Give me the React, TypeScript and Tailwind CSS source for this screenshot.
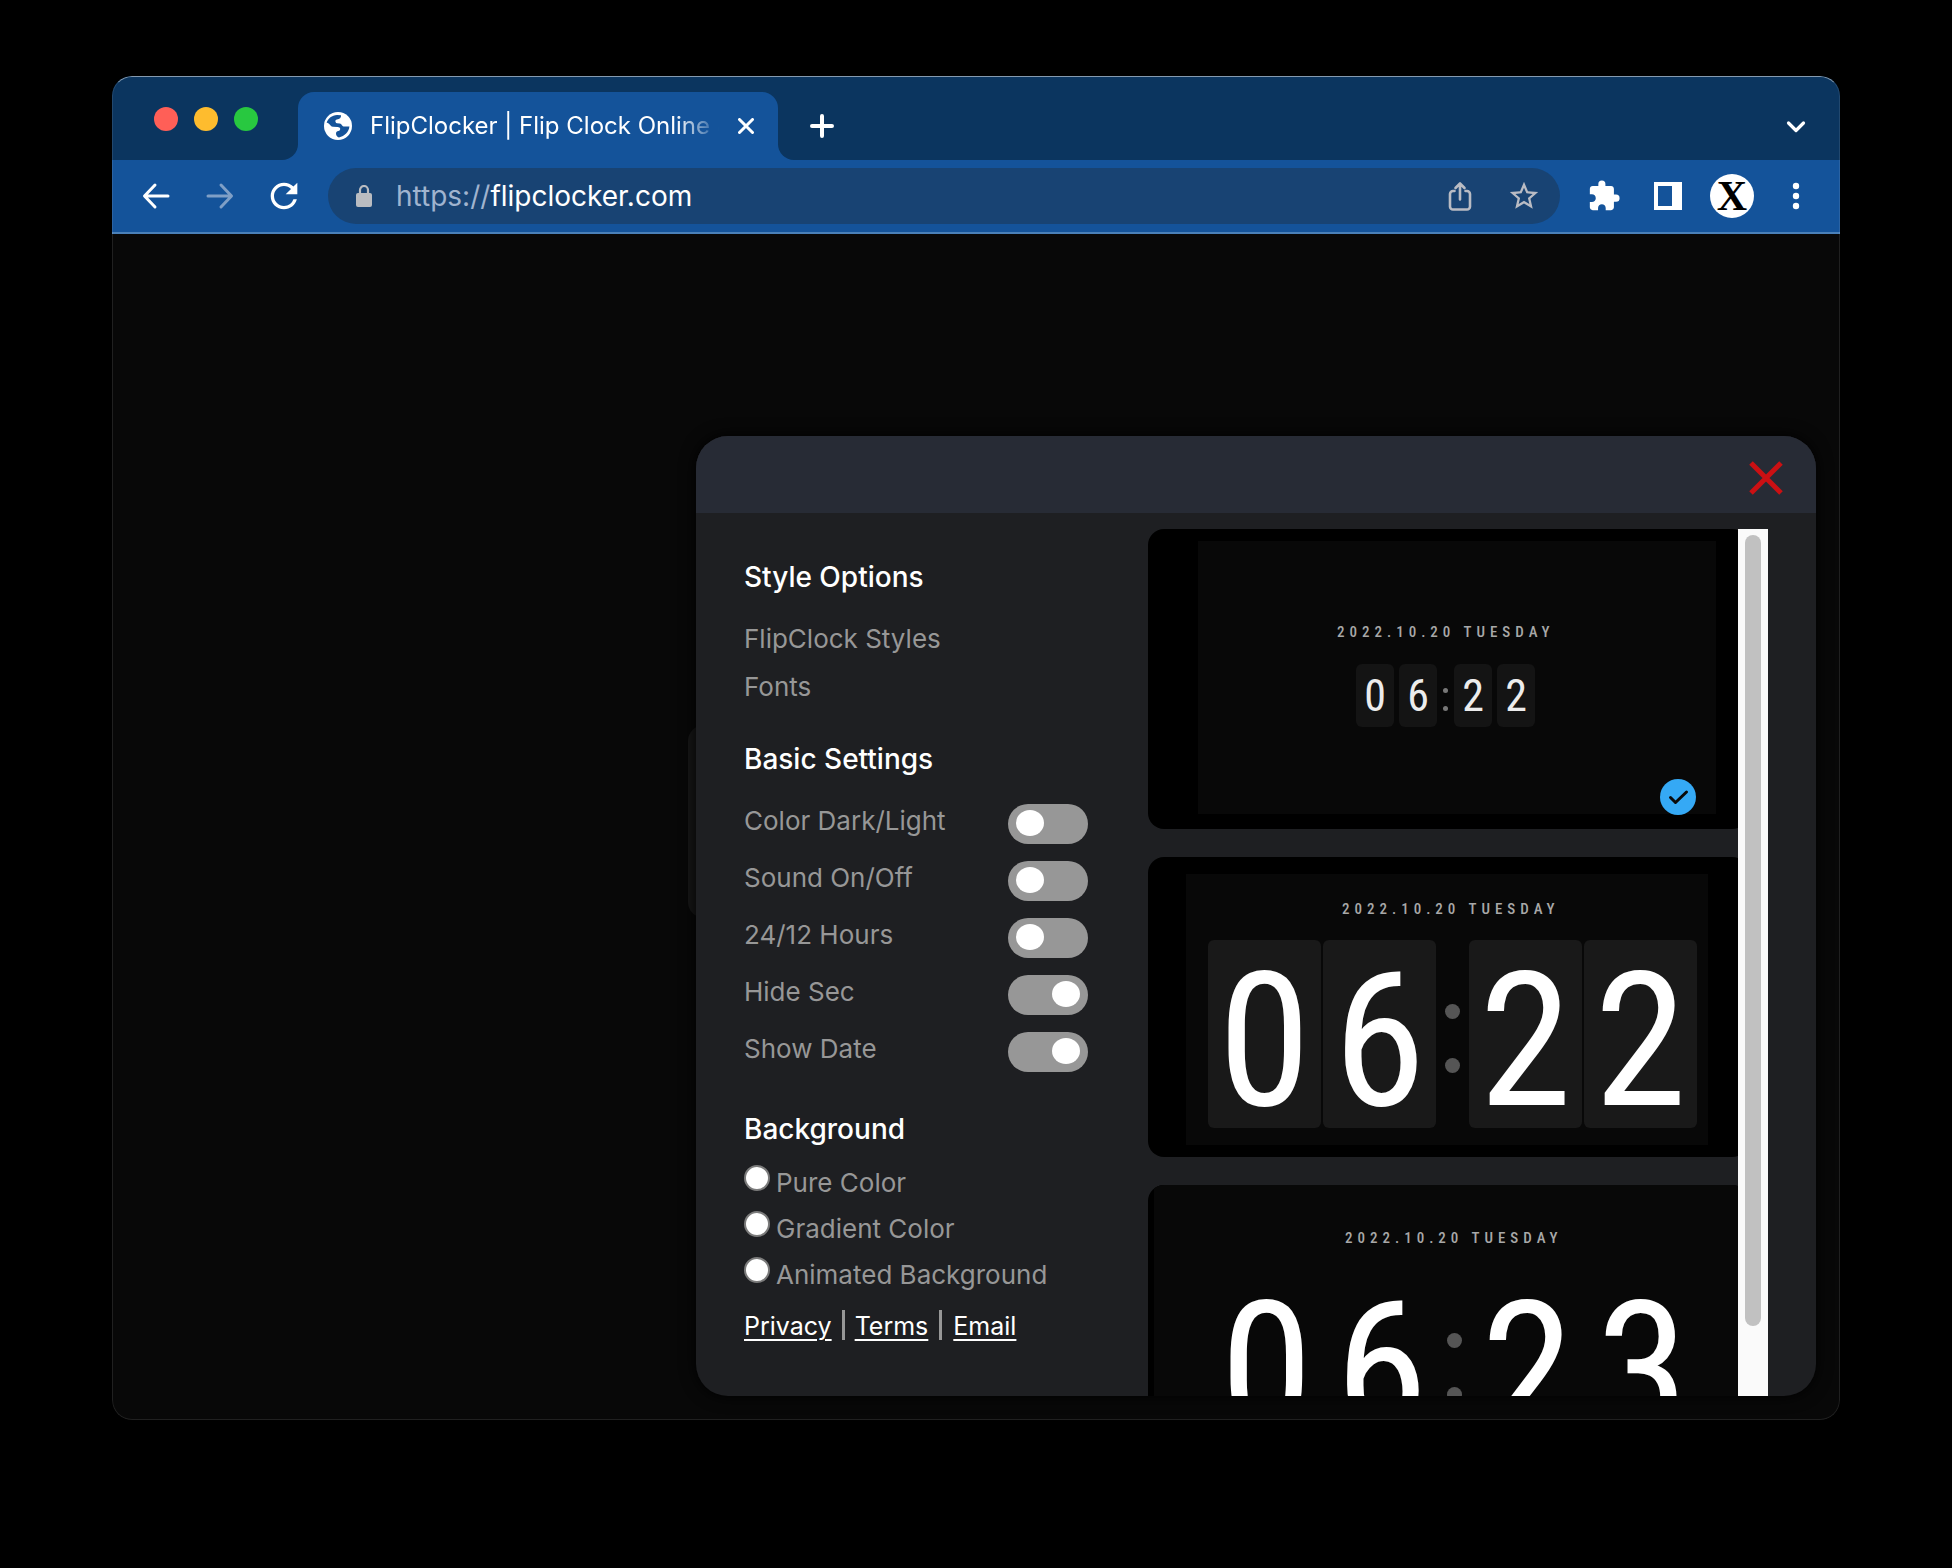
import React from "react";
import { MdExtension, MdRefresh, MdStarBorder } from "react-icons/md";

const toggles = [
  { label: "Color Dark/Light", on: false },
  { label: "Sound On/Off", on: false },
  { label: "24/12 Hours", on: false },
  { label: "Hide Sec", on: true },
  { label: "Show Date", on: true },
];

const backgrounds = ["Pure Color", "Gradient Color", "Animated Background"];

function GlobeIcon() {
  return (
    <svg className="size-7 shrink-0" viewBox="0 0 28 28" aria-hidden="true">
      <circle cx="14" cy="14" r="14" fill="#fff" />
      <path
        fill="#14539a"
        d="M2.6 10.6C4 6.6 8 3.2 13 3l4 .2c.2 1.6-.4 2.8-1.8 3.6-1.6.8-3.6.8-3.8 2-.1 1.3.4 2.2 1.6 2.4l2.6.3c1.5.2 1.9 1.3 2.800 2.200.7.7 1.600.9 2.700.9h4.300c-.4 5.300-4.800 9.800-10.400 10.800-1.700-.5-3-2-3-4 0-1.300 1-1.900 2.300-2.300 1.300-.4 2-1 1.900-2.300-.1-1.200-1.100-1.800-2.500-1.900l-4.700-.2c-2-.1-2.200-1.500-3.300-2.300-.8-.7-1.900-1.200-3.100-1.800z"
      />
    </svg>
  );
}

function Flare({ side }: { side: "left" | "right" }) {
  return (
    <div className="size-4 self-end bg-[#14539a]">
      <div className={side === "left" ? "size-4 rounded-br-2xl bg-[#0b355f]" : "size-4 rounded-bl-2xl bg-[#0b355f]"} />
    </div>
  );
}

function TabStrip() {
  return (
    <div className="flex h-[84px] bg-[#0b355f] pr-7 pl-[42px]">
      <div className="mr-6 flex items-center gap-4 pt-0.5">
        <button aria-label="Close window" className="size-6 rounded-full bg-[#ff5f57]" />
        <button aria-label="Minimize window" className="size-6 rounded-full bg-[#febc2e]" />
        <button aria-label="Zoom window" className="size-6 rounded-full bg-[#28c840]" />
      </div>
      <Flare side="left" />
      <div className="mt-4 flex w-[480px] items-center rounded-t-2xl bg-[#14539a] pr-6 pl-[26px]">
        <GlobeIcon />
        <span className="mr-3 ml-[18px] flex-1 overflow-hidden text-2xl whitespace-nowrap text-white [mask-image:linear-gradient(to_right,black_86%,transparent_98%)]">
          FlipClocker | Flip Clock Online &amp;
        </span>
        <button aria-label="Close tab">
          <svg className="size-4" viewBox="0 0 16 16" stroke="#fff" strokeWidth="3" strokeLinecap="round">
            <path d="M1.500 1.500l13 13M14.500 1.500l-13 13" />
          </svg>
        </button>
      </div>
      <Flare side="right" />
      <button aria-label="New tab" className="mt-4 ml-4">
        <svg className="size-6" viewBox="0 0 24 24" stroke="#fff" strokeWidth="4" strokeLinecap="round">
          <path d="M12 2v20M2 12h20" />
        </svg>
      </button>
      <button aria-label="Search tabs" className="mt-4 ml-auto">
        <svg className="size-8" viewBox="0 0 32 32" fill="none" stroke="#fff" strokeWidth="3.200" strokeLinecap="round" strokeLinejoin="round">
          <path d="M8.500 13l7.500 7.500L23.500 13" />
        </svg>
      </button>
    </div>
  );
}

function Toolbar() {
  return (
    <div className="flex h-[74px] items-center border-b-2 border-[#4a80b8] bg-[#14539a] px-7">
      <div className="flex items-center gap-8">
        <button aria-label="Back">
          <svg className="size-8" viewBox="0 0 32 32" fill="none" stroke="#fff" strokeWidth="3" strokeLinecap="round" strokeLinejoin="round">
            <path d="M28 16H5M15 5L4.500 16 15 27" />
          </svg>
        </button>
        <button aria-label="Forward">
          <svg className="size-8" viewBox="0 0 32 32" fill="none" stroke="#7f9fc6" strokeWidth="3" strokeLinecap="round" strokeLinejoin="round">
            <path d="M4 16h23M17 5l10.500 11L17 27" />
          </svg>
        </button>
        <button aria-label="Reload" className="flex size-8 items-center justify-center">
          <MdRefresh className="size-10 shrink-0 text-white" />
        </button>
      </div>
      <div className="mx-7 flex h-14 flex-1 items-center rounded-full bg-[#184373] pr-5 pl-7">
        <svg className="h-[22px] w-4 shrink-0" viewBox="0 0 16 22" fill="none" aria-hidden="true">
          <rect x="0" y="8" width="16" height="14" rx="2" fill="#b9bcc1" />
          <path d="M4 9V5a4 4 0 018 0v4" stroke="#b9bcc1" strokeWidth="2.200" />
        </svg>
        <div className="ml-6 flex-1 text-[28px] leading-9 text-white">
          <span className="text-[#a0b4cf]">https://</span>flipclocker.com
        </div>
        <button aria-label="Share" className="mr-8">
          <svg className="size-8" viewBox="0 0 32 32" fill="none" stroke="#b9bcc4" strokeWidth="2.600" strokeLinecap="round" strokeLinejoin="round">
            <path d="M10.500 11H9a3 3 0 00-3 3v12.500a3 3 0 003 3h14a3 3 0 003-3V14a3 3 0 00-3-3h-1.500M16 19.500V4M11.500 8L16 3.500 20.500 8" />
          </svg>
        </button>
        <button aria-label="Bookmark this page" className="flex size-8 items-center justify-center">
          <MdStarBorder className="size-[34px] shrink-0 text-[#b9bcc4]" />
        </button>
      </div>
      <div className="flex items-center">
        <button aria-label="Extensions" className="mr-8 flex size-8 items-center justify-center">
          <MdExtension className="size-[34px] shrink-0 text-white" />
        </button>
        <button aria-label="Side panel" className="mr-[26px]">
          <svg className="size-8" viewBox="0 0 32 32">
            <path fill="#fff" fillRule="evenodd" d="M2 2h28v28H2zM6 6v20h14V6z" />
          </svg>
        </button>
        <button
          aria-label="Profile"
          className="mr-[26px] flex size-11 items-center justify-center rounded-full bg-white font-['Liberation_Serif',serif] text-[42px] leading-[44px] font-bold text-black"
        >
          X
        </button>
        <button aria-label="Menu">
          <svg className="size-8" viewBox="0 0 32 32" fill="#fff">
            <circle cx="16" cy="6" r="3.200" />
            <circle cx="16" cy="16" r="3.200" />
            <circle cx="16" cy="26" r="3.200" />
          </svg>
        </button>
      </div>
    </div>
  );
}

function Settings() {
  return (
    <div className="w-[344px] shrink-0 pt-12 pb-14 text-[26px] text-[#979797]">
      <h2 className="text-[28px] leading-8 font-medium text-white">Style Options</h2>
      <ul className="mt-[22px]">
        <li className="leading-[48px]">
          <button>FlipClock Styles</button>
        </li>
        <li className="leading-[48px]">
          <button>Fonts</button>
        </li>
      </ul>

      <h2 className="mt-8 text-[28px] leading-8 font-medium text-white">Basic Settings</h2>
      <div className="mt-[17px]">
        {toggles.map((t) => (
          <label key={t.label} className="flex h-[57px] justify-between leading-[57px]">
            {t.label}
            <input
              type="checkbox"
              role="switch"
              defaultChecked={t.on}
              className="mt-3 h-10 w-20 appearance-none rounded-full bg-[#979797] pt-[6px] pl-2 before:block before:h-[26px] before:w-7 before:rounded-[50%] before:bg-white checked:pl-11"
            />
          </label>
        ))}
      </div>

      <h2 className="mt-9 text-[28px] leading-8 font-medium text-white">Background</h2>
      <div className="mt-[15px]">
        {backgrounds.map((b) => (
          <label key={b} className="flex h-[46px] leading-[46px] whitespace-nowrap">
            <input
              type="radio"
              name="background"
              className="mt-[5px] mr-1.5 size-[26px] shrink-0 appearance-none rounded-full border-2 border-[#7b7b7b] bg-white"
            />
            {b}
          </label>
        ))}
      </div>

      <nav className="mt-3 flex h-[30px] text-[25px] leading-8 text-white">
        <a href="#privacy" className="underline decoration-2 underline-offset-4">Privacy</a>
        <span className="mx-[10px] w-[3px] bg-[#979797]" />
        <a href="#terms" className="underline decoration-2 underline-offset-4">Terms</a>
        <span className="mx-[11px] w-[3px] bg-[#979797]" />
        <a href="#email" className="underline decoration-2 underline-offset-4">Email</a>
      </nav>
    </div>
  );
}

const dateClass = "h-4 font-['Roboto_Condensed',Roboto,sans-serif] text-[15px] leading-4 font-medium tracking-[5px] whitespace-nowrap text-[#a8a8a8]";

function SmallClock() {
  const tile = "flex h-[63px] w-[38px] items-center justify-center rounded-md bg-[#141414]";
  return (
    <div className="flex items-center gap-[5px] font-['Roboto_Condensed',Roboto,sans-serif] text-[44px] leading-none text-[#ececec]">
      <span className={tile}>0</span>
      <span className={tile}>6</span>
      <span className="flex w-[7px] flex-col items-center gap-[13px] pt-2">
        <i className="size-[5px] rounded-full bg-[#777]" />
        <i className="size-[5px] rounded-full bg-[#777]" />
      </span>
      <span className={tile}>2</span>
      <span className={tile}>2</span>
    </div>
  );
}

function LargeClock({ digits, tiled }: { digits: string; tiled: boolean }) {
  const tile = tiled
    ? "flex h-[188px] w-[113px] items-center justify-center rounded-md bg-[#191919] pt-3.5"
    : "flex h-[188px] w-[113px] items-center justify-center pt-3.5";
  return (
    <div className="flex items-center gap-0.5 font-['Roboto_Condensed',Roboto,sans-serif] text-[188px] leading-none text-white">
      <span className={tile}>{digits[0]}</span>
      <span className={tile}>{digits[1]}</span>
      <span className="flex w-[29px] flex-col items-center gap-[39px] pt-2">
        <i className="size-[15px] rounded-full bg-[#555]" />
        <i className="size-[15px] rounded-full bg-[#555]" />
      </span>
      <span className={tile}>{digits[2]}</span>
      <span className={tile}>{digits[3]}</span>
    </div>
  );
}

function Previews() {
  const card = "relative block h-[300px] w-[600px] shrink-0 overflow-hidden rounded-2xl bg-black text-left";
  return (
    <div className="flex min-w-0 flex-1 [contain:size]">
      <div className="flex min-w-0 flex-1 flex-col gap-7 overflow-hidden">
        <button aria-label="Small flip clock" className={card}>
          <div className="mt-3 mb-[15px] ml-[50px] h-[273px] w-[518px] bg-[#080808] pt-[83px]">
            <div className="ml-[139px]">
              <div className={dateClass}>2022.10.20 TUESDAY</div>
            </div>
            <div className="mt-6 ml-[158px]">
              <SmallClock />
            </div>
          </div>
          <svg className="absolute right-[52px] bottom-[14px] size-9" viewBox="0 0 36 36" fill="none">
            <circle cx="18" cy="18" r="18" fill="#35a9f5" />
            <path d="M10.500 18.500l5 5L26.500 13" stroke="#0a0a0a" strokeWidth="3" strokeLinecap="round" strokeLinejoin="round" />
          </svg>
        </button>
        <button aria-label="Large flip clock" className={card}>
          <div className="mt-[17px] mb-3 ml-[38px] h-[271px] w-[522px] bg-[#080808] pt-[27px]">
            <div className="ml-[156px]">
              <div className={dateClass}>2022.10.20 TUESDAY</div>
            </div>
            <div className="mt-[23px] ml-[22px]">
              <LargeClock digits="0622" tiled />
            </div>
          </div>
        </button>
        <button aria-label="Large plain clock" className={card}>
          <div className="ml-1.5 h-[300px] bg-[#080808] pt-[45px]">
            <div className="ml-[191px]">
              <div className={dateClass}>2022.10.20 TUESDAY</div>
            </div>
            <div className="mt-[23px] ml-14">
              <LargeClock digits="0623" tiled={false} />
            </div>
          </div>
        </button>
      </div>
      <div className="flex w-[30px] shrink-0 justify-center bg-[#fafafa] pt-1.5">
        <div className="h-[791px] w-4 rounded-full bg-[#c1c1c1]" />
      </div>
    </div>
  );
}

function SettingsPanel() {
  return (
    <section className="relative w-full max-w-[1120px] overflow-hidden rounded-[32px] bg-[#1e1f22] shadow-[0_0_16px_#000]">
      <header className="flex h-[77px] items-center justify-end bg-[#272b35] pt-1.5 pr-[33px]">
        <button aria-label="Close settings">
          <svg className="size-[34px]" viewBox="0 0 34 34" stroke="#cb1013" strokeWidth="5">
            <path d="M2 2l30 30M32 2L2 32" />
          </svg>
        </button>
      </header>
      <div className="flex gap-[60px] px-12">
        <Settings />
        <div className="flex min-w-0 flex-1 pt-4">
          <Previews />
        </div>
      </div>
    </section>
  );
}

export default function App() {
  return (
    <div className="min-h-screen bg-black px-28 pt-[76px] pb-[148px] font-['Inter',sans-serif]">
      <main className="relative overflow-hidden rounded-[20px] bg-[#080808]">
        <TabStrip />
        <Toolbar />
        <div className="relative flex justify-end pt-[202px] pr-6 pb-6">
          <div className="absolute top-[491px] right-6 h-[193px] w-[1128px] rounded-2xl bg-[#171717]" />
          <SettingsPanel />
        </div>
        <div className="pointer-events-none absolute inset-0 rounded-[20px] border border-white/10 border-t-white/50" />
      </main>
    </div>
  );
}
